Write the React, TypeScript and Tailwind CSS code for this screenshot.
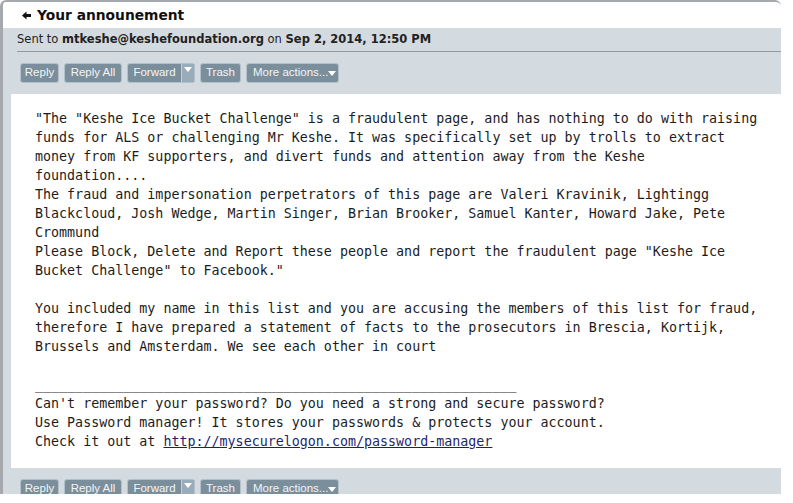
import React from "react";

const lines: string[] = [
  '"The "Keshe Ice Bucket Challenge" is a fraudulent page, and has nothing to do with raising',
  "funds for ALS or challenging Mr Keshe. It was specifically set up by trolls to extract",
  "money from KF supporters, and divert funds and attention away from the Keshe",
  "foundation....",
  "The fraud and impersonation perpetrators of this page are Valeri Kravinik, Lightingg",
  "Blackcloud, Josh Wedge, Martin Singer, Brian Brooker, Samuel Kanter, Howard Jake, Pete",
  "Crommund",
  'Please Block, Delete and Report these people and report the fraudulent page "Keshe Ice',
  'Bucket Challenge" to Facebook."',
  "",
  "You included my name in this list and you are accusing the members of this list for fraud,",
  "therefore I have prepared a statement of facts to the prosecutors in Brescia, Kortijk,",
  "Brussels and Amsterdam. We see each other in court",
  "",
  "____________________________________________________________",
  "Can't remember your password? Do you need a strong and secure password?",
  "Use Password manager! It stores your passwords & protects your account.",
];

function Tri() {
  return (
    <svg width="8" height="5" viewBox="0 0 8 5" className="shrink-0">
      <path d="M0 0 L8 0 L4 5 Z" fill="#ffffff" />
    </svg>
  );
}

const btnFont = { fontFamily: '"Liberation Sans", Arial, sans-serif' };

function Btn({ label, w }: { label: string; w: string }) {
  return (
    <div
      className={`${w} h-[20px] shrink-0 flex items-center justify-center whitespace-nowrap rounded-[3px] border border-[#b3c0ca] bg-[#7b8e9b] text-[11.5px] text-[#f3f5f7]`}
      style={btnFont}
    >
      {label}
    </div>
  );
}

function Toolbar() {
  return (
    <div className="flex items-start gap-[5px] pl-[17px]">
      <Btn label="Reply" w="w-[39px]" />
      <Btn label="Reply All" w="w-[58px]" />
      <div
        className="w-[68px] h-[20px] shrink-0 flex whitespace-nowrap rounded-[3px] border border-[#b3c0ca] bg-[#7b8e9b] text-[11.5px] text-[#f3f5f7] overflow-hidden"
        style={btnFont}
      >
        <div className="flex-1 flex items-center justify-center">Forward</div>
        <div className="w-[13px] flex justify-center pt-[3px] bg-[#9aacb9] border-l border-[#c3cdd5]">
          <Tri />
        </div>
      </div>
      <Btn label="Trash" w="w-[41px]" />
      <div
        className="w-[93px] h-[20px] shrink-0 flex items-center justify-between whitespace-nowrap pl-[6px] pr-[6px] rounded-[3px] border border-[#b3c0ca] bg-[#7b8e9b] text-[11.5px] text-[#f3f5f7]"
        style={btnFont}
      >
        <span>More actions...</span>
        <Tri />
      </div>
    </div>
  );
}

export default function App() {
  return (
    <div className="w-[793px] h-[503px] bg-white overflow-hidden">
      <div className="w-[781px] h-[494px] flex flex-col overflow-hidden border-l-[3px] border-t-[2px] border-[#a5a9ad] rounded-tl-[6px] rounded-tr-[6px] bg-[#d3dae0]">
        <div className="h-[26px] shrink-0 bg-white flex items-center pl-[19px]">
          <svg width="9" height="9" viewBox="0 0 9 9" className="mr-[6px]">
            <path d="M0 4.5 L4.5 0.5 L4.5 3 L9 3 L9 6 L4.5 6 L4.5 8.5 Z" fill="#111" />
          </svg>
          <span
            className="text-[13.8px] font-bold text-[#111]"
            style={{ fontFamily: '"DejaVu Sans", Verdana, sans-serif' }}
          >
            Your announement
          </span>
        </div>
        <div
          className="h-[23px] shrink-0 flex items-center pl-[14px] text-[11.5px] text-[#222]"
          style={{ fontFamily: '"DejaVu Sans", Verdana, sans-serif' }}
        >
          <span>Sent to&nbsp;</span>
          <span className="font-bold">mtkeshe@keshefoundation.org</span>
          <span>&nbsp;on&nbsp;</span>
          <span className="font-bold">Sep 2, 2014, 12:50 PM</span>
        </div>
        <div className="ml-[14px] h-px shrink-0 bg-[#939ba2]" />
        <div className="mt-[11px] shrink-0">
          <Toolbar />
        </div>
        <div
          className="mt-[11px] ml-[8px] h-[374px] shrink-0 bg-white pl-[24px] pt-[15px] text-[13.33px] leading-[19px] text-[#1c1c1c] whitespace-pre"
          style={{ fontFamily: '"DejaVu Sans Mono", "Liberation Mono", monospace' }}
        >
          {lines.map((l, i) => (
            <div key={i} className="h-[19px]">
              {l}
            </div>
          ))}
          <div className="h-[19px]">
            {"Check it out at "}
            <a className="underline text-[#1f1f6e]" href="#">
              http://mysecurelogon.com/password-manager
            </a>
          </div>
        </div>
        <div className="mt-[11px] shrink-0">
          <Toolbar />
        </div>
      </div>
    </div>
  );
}
